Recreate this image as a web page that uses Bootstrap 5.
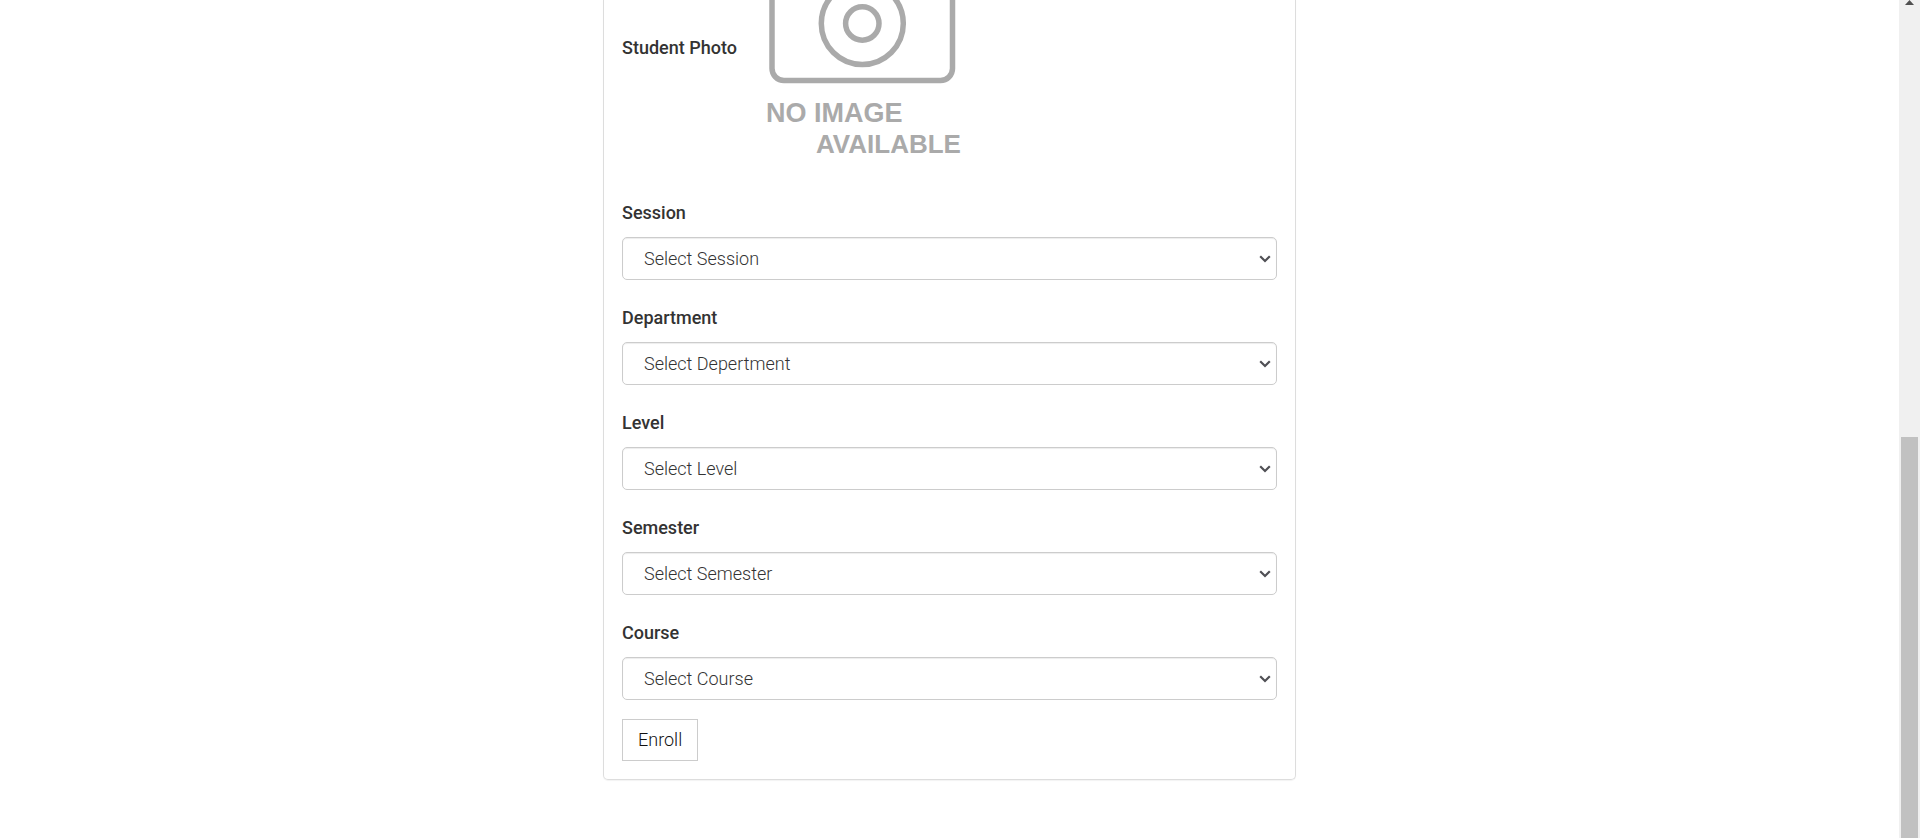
<!DOCTYPE html>
<html lang="en">
<head>
<meta charset="utf-8">
<meta name="viewport" content="width=device-width, initial-scale=1">
<title>Enroll</title>
<link rel="stylesheet" href="https://cdn.jsdelivr.net/npm/bootstrap@5.3.0/dist/css/bootstrap.min.css">
<style>
  body { font-family: Roboto, "Liberation Sans", sans-serif; font-size: 18px; font-weight: 300; line-height: 26px; color: #333; background: #fff; }
  .enroll-wrap { max-width: 693px; }
  .enroll-panel { border: 1px solid #ddd; border-top: 0; border-radius: 0 0 5px 5px; box-shadow: 0 1px 1px rgba(0,0,0,.05); padding: 0 18px 18px; margin-bottom: 58px; }
  .photo-row { gap: 27px; padding-bottom: 40px; }
  .field-label { font-weight: 500; margin-bottom: 11px; display: block; }
  .photo-label { font-weight: 500; padding-top: 35px; }
  .field { margin-bottom: 25px; }
  .field:last-of-type { margin-bottom: 19px; }
  .form-select { height: 43px; padding: 0 40px 0 21px; font-size: 18px; font-weight: 300; line-height: 26px; color: #333; border: 1px solid #ccc; border-radius: 5px; box-shadow: inset 0 1px 1px rgba(0,0,0,.075);
    background-image: url("data:image/svg+xml,%3Csvg xmlns='http://www.w3.org/2000/svg' viewBox='0 0 12 8'%3E%3Cpath d='M1.2 1.2 6 6l4.800-4.800' fill='none' stroke='%23505055' stroke-width='2.200'/%3E%3C/svg%3E"); background-size: 12px 8px; background-position: right 5px center; }
  .btn-enroll { height: 42px; padding: 0 15px; font-size: 18px; font-weight: 300; line-height: 26px; color: #111; background: #fff; border: 1px solid #ccc; border-radius: 0; }
  .scroll-rail { width: 21px; background: #f0f0f0; padding: 0 2px; }
  .scroll-thumb { background: #c1c1c1; margin-top: 432px; }
</style>
</head>
<body>
<div class="d-flex min-vh-100">
  <main class="flex-grow-1">
    <div class="enroll-wrap mx-auto">
      <form class="enroll-panel">
        <div class="photo-row d-flex align-items-start">
          <span class="photo-label">Student Photo</span>
          <svg width="204" height="160" viewBox="0 0 204 160" role="img" aria-label="No image available">
            <g fill="none" stroke="#aaa" stroke-width="5.500">
              <path d="M8 -10V68.500a12 12 0 0 0 12 12H176.500a12 12 0 0 0 12-12V-10"/>
              <circle cx="98.300" cy="23.500" r="41"/>
              <circle cx="98.300" cy="23.500" r="16.700"/>
            </g>
            <g fill="#aaa" font-family="Liberation Sans, sans-serif" font-weight="700">
              <text x="2" y="122" font-size="27">NO IMAGE</text>
              <text x="52" y="153" font-size="26">AVAILABLE</text>
            </g>
          </svg>
        </div>
        <div class="field">
          <label class="field-label" for="session">Session</label>
          <select class="form-select" id="session"><option>Select Session</option></select>
        </div>
        <div class="field">
          <label class="field-label" for="department">Department</label>
          <select class="form-select" id="department"><option>Select Depertment</option></select>
        </div>
        <div class="field">
          <label class="field-label" for="level">Level</label>
          <select class="form-select" id="level"><option>Select Level</option></select>
        </div>
        <div class="field">
          <label class="field-label" for="semester">Semester</label>
          <select class="form-select" id="semester"><option>Select Semester</option></select>
        </div>
        <div class="field">
          <label class="field-label" for="course">Course</label>
          <select class="form-select" id="course"><option>Select Course</option></select>
        </div>
        <button type="submit" class="btn btn-enroll d-block">Enroll</button>
      </form>
    </div>
  </main>
  <div class="scroll-rail d-flex flex-column" aria-hidden="true">
    <svg width="17" height="5" viewBox="0 0 17 5"><path d="M8.500 0 13 5H4z" fill="#505050"/></svg>
    <div class="scroll-thumb flex-grow-1"></div>
  </div>
</div>
<script src="https://cdn.jsdelivr.net/npm/bootstrap@5.3.0/dist/js/bootstrap.bundle.min.js"></script>
</body>
</html>
